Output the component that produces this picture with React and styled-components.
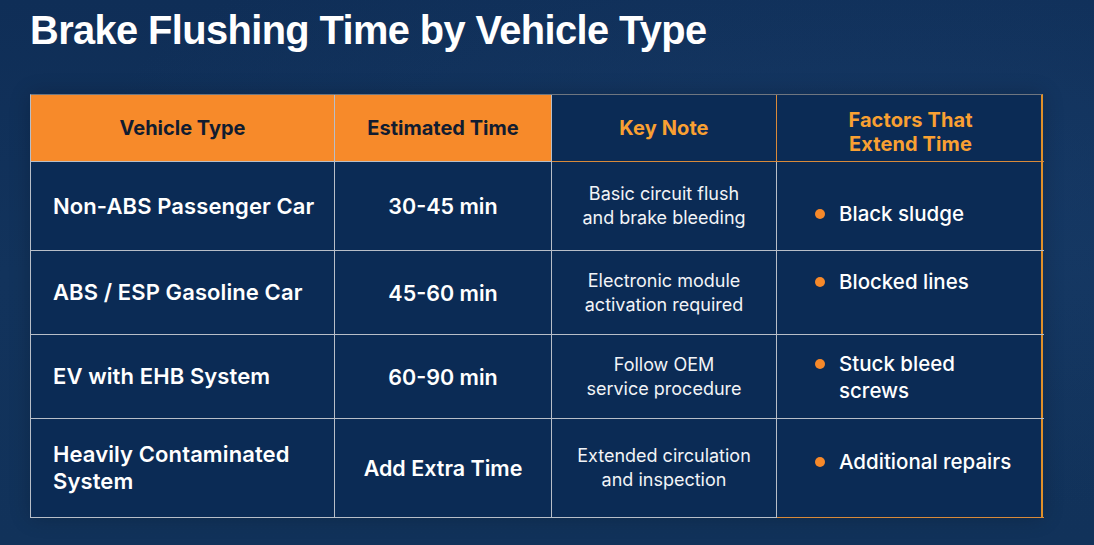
import React from "react";
import styled, { createGlobalStyle } from "styled-components";

const Global = createGlobalStyle`
  html, body { margin: 0; padding: 0; }
  body {
    width: 1094px;
    height: 545px;
    overflow: hidden;
    background: #12325b;
  }
`;

const Page = styled.div`
  width: 1094px;
  height: 545px;
  box-sizing: border-box;
  padding: 7px 0 0 30px;
  background:
    radial-gradient(ellipse at 80% 35%, rgba(30, 70, 120, 0.35), transparent 65%),
    linear-gradient(180deg, #0f2e57 0%, #12335c 50%, #11325a 100%);
  font-family: Inter, "Noto Sans", sans-serif;
`;

const Title = styled.h1`
  margin: 0;
  font-family: "Liberation Sans", Arial, sans-serif;
  font-weight: 700;
  font-size: 39.8px;
  line-height: 46px;
  letter-spacing: -0.6px;
  color: #ffffff;
`;

const Table = styled.div`
  margin-top: 41px;
  width: 1013px;
  display: grid;
  grid-template-columns: 304px 217px 225px 267px;
  grid-template-rows: 67px 89px 84px 84px 99px;
  border-left: 1px solid #b8bec8;
  border-top: 1px solid #6f7680;
  border-right: 2px solid #e0902a;
  box-sizing: border-box;
  background: #0b2b55;
  box-shadow: 0 0 20px rgba(0, 0, 0, 0.2);
`;

const Cell = styled.div`
  box-sizing: border-box;
  border-right: ${(p) => (p.$last ? "none" : `1px solid ${p.$orangeLine ? "#d98a3a" : "#b8bec8"}`)};
  border-bottom: 1px solid ${(p) => (p.$orangeLine ? "#d98a3a" : "#b8bec8")};
  display: flex;
  align-items: center;
  justify-content: ${(p) => (p.$left ? "flex-start" : "center")};
  padding: ${(p) => (p.$left ? "0 16px 0 22px" : "0 6px")};
  text-align: ${(p) => (p.$left ? "left" : "center")};
`;

const HeadCell = styled(Cell)`
  background: ${(p) => (p.$filled ? "#f78a2a" : "transparent")};
  color: ${(p) => (p.$filled ? "#111c30" : "#f9a032")};
  font-weight: 700;
  font-size: 20px;
  line-height: 24px;
  letter-spacing: ${(p) => (p.$filled ? "0" : "0.1px")};
  padding-top: ${(p) => (p.$drop ? "8px" : "0")};
`;

const NameCell = styled(Cell)`
  color: #ffffff;
  font-weight: 600;
  font-size: 22px;
  line-height: 27px;
  letter-spacing: 0.1px;
`;

const TimeCell = styled(Cell)`
  color: #ffffff;
  font-weight: 600;
  font-size: 21.5px;
  letter-spacing: 0;
`;

const NoteCell = styled(Cell)`
  color: #f2f4f7;
  font-weight: 400;
  font-size: 18px;
  line-height: 24px;
`;

const FactorCell = styled(Cell)`
  justify-content: flex-start;
  align-items: center;
  padding: 0 16px 0 38px;
  color: #ffffff;
  font-weight: 500;
  font-size: 20.5px;
  line-height: 27px;
  text-align: left;
`;

const Factor = styled.div`
  display: flex;
  align-items: flex-start;
  gap: 14px;
  margin-top: ${(p) => p.$shift || 0}px;
`;

const Dot = styled.span`
  flex: none;
  width: 10px;
  height: 10px;
  border-radius: 50%;
  background: #f7892a;
  margin-top: 9px;
`;

const rows = [
  {
    name: "Non-ABS Passenger Car",
    time: "30-45 min",
    note: ["Basic circuit flush", "and brake bleeding"],
    factor: ["Black sludge"],
    shift: 14,
  },
  {
    name: "ABS / ESP Gasoline Car",
    time: "45-60 min",
    note: ["Electronic module", "activation required"],
    factor: ["Blocked lines"],
    shift: -22,
  },
  {
    name: "EV with EHB System",
    time: "60-90 min",
    note: ["Follow OEM", "service procedure"],
    factor: ["Stuck bleed", "screws"],
    shift: 0,
  },
  {
    name: ["Heavily Contaminated", "System"],
    time: "Add Extra Time",
    note: ["Extended circulation", "and inspection"],
    factor: ["Additional repairs"],
    shift: -14,
  },
];

const lines = (v) =>
  Array.isArray(v)
    ? v.map((t, i) => (
        <React.Fragment key={i}>
          {i > 0 && <br />}
          {t}
        </React.Fragment>
      ))
    : v;

export default function App() {
  return (
    <Page>
      <Global />
      <Title>Brake Flushing Time by Vehicle Type</Title>
      <Table>
        <HeadCell $filled>Vehicle Type</HeadCell>
        <HeadCell $filled>Estimated Time</HeadCell>
        <HeadCell $orangeLine>Key Note</HeadCell>
        <HeadCell $orangeLine $last $drop>
          Factors That
          <br />
          Extend Time
        </HeadCell>
        {rows.map((r, i) => (
          <React.Fragment key={i}>
            <NameCell $left>
              <div>{lines(r.name)}</div>
            </NameCell>
            <TimeCell>{r.time}</TimeCell>
            <NoteCell>
              <div>{lines(r.note)}</div>
            </NoteCell>
            <FactorCell $last $orangeLine={i === rows.length - 1}>
              <Factor $shift={r.shift}>
                <Dot />
                <div>{lines(r.factor)}</div>
              </Factor>
            </FactorCell>
          </React.Fragment>
        ))}
      </Table>
    </Page>
  );
}
